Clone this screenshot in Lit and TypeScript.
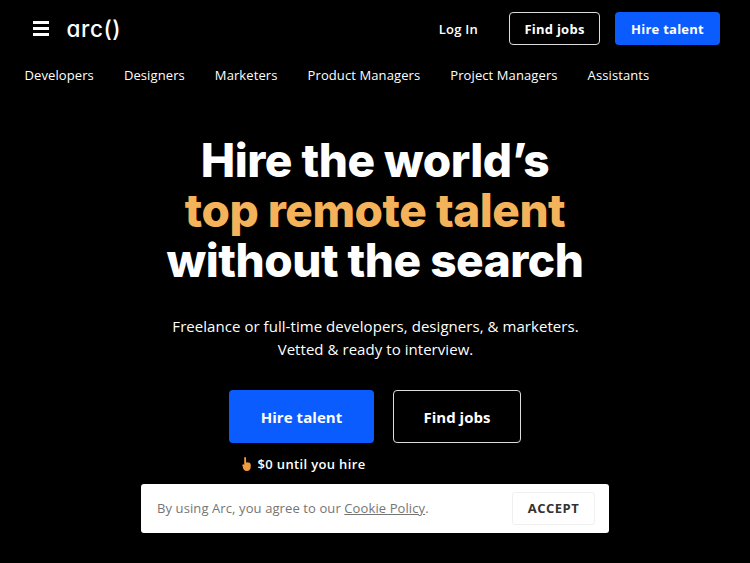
import { html, css, LitElement } from 'lit';
import { customElement } from 'lit/decorators.js';

const CATEGORIES = ['Developers', 'Designers', 'Marketers', 'Product Managers', 'Project Managers', 'Assistants'];

@customElement('app-root')
export default class AppRoot extends LitElement {
  static styles = css`
    :host {
      display: block;
      position: relative;
      width: 750px;
      height: 563px;
      overflow: hidden;
      background: #000;
      color: #fff;
      font-family: 'Open Sans', sans-serif;
    }

    .topbar {
      display: flex;
      align-items: center;
      height: 33px;
      padding: 12px 30px 0 33px;
    }

    .burger {
      display: flex;
      flex-direction: column;
      gap: 3px;
      width: 16px;
      margin-right: 17.5px;
    }

    .burger span {
      height: 3px;
      background: #fff;
    }

    .logo {
      padding-top: 1px;
      font-family: 'Inter', sans-serif;
      font-feature-settings: 'cv11';
      font-size: 22.5px;
      font-weight: 500;
      line-height: 32px;
      letter-spacing: 0.6px;
      color: #fff;
    }

    .actions {
      display: flex;
      align-items: center;
      margin-left: auto;
    }

    .login {
      font-size: 13px;
      font-weight: 600;
      letter-spacing: 0.25px;
      margin-right: 31px;
    }

    .btn {
      display: flex;
      align-items: center;
      justify-content: center;
      box-sizing: border-box;
      border-radius: 4px;
      font-weight: 700;
      color: #fff;
    }

    .btn.small {
      height: 33px;
      font-size: 13px;
      letter-spacing: 0.25px;
    }

    .btn.large {
      height: 53px;
      font-size: 15px;
    }

    .btn.primary {
      background: #0b5cff;
    }

    .btn.outline {
      border: 1px solid #ddd;
    }

    .find-small {
      width: 91px;
      margin-right: 15px;
      border-color: #ccc;
    }

    .hire-small {
      width: 105px;
    }

    .categories {
      display: flex;
      gap: 30px;
      padding: 21px 0 0 24.5px;
      font-size: 13px;
      line-height: 19px;
      letter-spacing: 0.1px;
    }

    .hero {
      display: flex;
      flex-direction: column;
      align-items: center;
      text-align: center;
      padding-top: 50px;
    }

    h1 {
      margin: 0;
      font-family: 'Inter', sans-serif;
      font-size: 46px;
      font-weight: 800;
      line-height: 50px;
      letter-spacing: -0.5px;
    }

    h1 em {
      display: block;
      font-style: normal;
      color: #f4b25a;
    }

    .lede {
      margin: 30px 0 0;
      padding-left: 1px;
      font-size: 15px;
      line-height: 23px;
      letter-spacing: 0.05px;
    }

    .cta {
      display: flex;
      align-items: flex-start;
      gap: 19px;
      margin-top: 29px;
    }

    .hire-col {
      display: flex;
      flex-direction: column;
      align-items: center;
      width: 145px;
    }

    .hire-large {
      width: 145px;
      letter-spacing: 0.05px;
    }

    .find-large {
      width: 128px;
    }

    .note {
      display: flex;
      align-items: center;
      gap: 5px;
      margin-top: 12px;
      padding-left: 3px;
      white-space: nowrap;
      font-size: 13px;
      line-height: 19px;
      font-weight: 600;
      letter-spacing: 0.35px;
    }

    .note svg {
      margin-top: -2px;
    }

    .cookie {
      position: absolute;
      left: 141px;
      top: 484px;
      box-sizing: border-box;
      width: 468px;
      height: 49px;
      display: flex;
      align-items: center;
      justify-content: space-between;
      padding: 0 14px 1px 16px;
      background: #fff;
      border-radius: 3px;
      color: #757575;
      font-size: 13px;
      letter-spacing: 0.1px;
    }

    .cookie a {
      color: #757575;
      text-decoration: underline;
    }

    .accept {
      display: flex;
      align-items: center;
      justify-content: center;
      box-sizing: border-box;
      width: 83px;
      height: 33px;
      border: 1px solid #f0f0f0;
      border-radius: 3px;
      color: #333;
      font-size: 13px;
      font-weight: 700;
      letter-spacing: 0.5px;
    }
  `;

  render() {
    return html`
      <div class="topbar">
        <div class="burger"><span></span><span></span><span></span></div>
        <div class="logo">arc()</div>
        <div class="actions">
          <span class="login">Log In</span>
          <div class="btn small outline find-small">Find jobs</div>
          <div class="btn small primary hire-small">Hire talent</div>
        </div>
      </div>
      <div class="categories">
        ${CATEGORIES.map((c) => html`<span>${c}</span>`)}
      </div>
      <div class="hero">
        <h1>Hire the world’s<em>top remote talent</em>without the search</h1>
        <p class="lede">
          Freelance or full-time developers, designers, &amp; marketers.<br />
          Vetted &amp; ready to interview.
        </p>
        <div class="cta">
          <div class="hire-col">
            <div class="btn large primary hire-large">Hire talent</div>
            <div class="note">
              <svg width="12" height="14" viewBox="0 0 12 15">
                <path
                  fill="#f19a3e"
                  d="M3 1c0-.6.4-1 1-1s1 .4 1 1v5l1-.3 1 .2 1 .1 1 .5c.6.4 1 1 1 1.800V11c0 2-1.500 4-4 4-2 0-3-1-4-2.500L1.200 9.500c-.4-.6-.2-1.200.3-1.500.5-.3 1-.1 1.500.4V1z"
                />
              </svg>
              <span>$0 until you hire</span>
            </div>
          </div>
          <div class="btn large outline find-large">Find jobs</div>
        </div>
      </div>
      <div class="cookie">
        <span>By using Arc, you agree to our <a>Cookie Policy</a>.</span>
        <div class="accept">ACCEPT</div>
      </div>
    `;
  }
}
